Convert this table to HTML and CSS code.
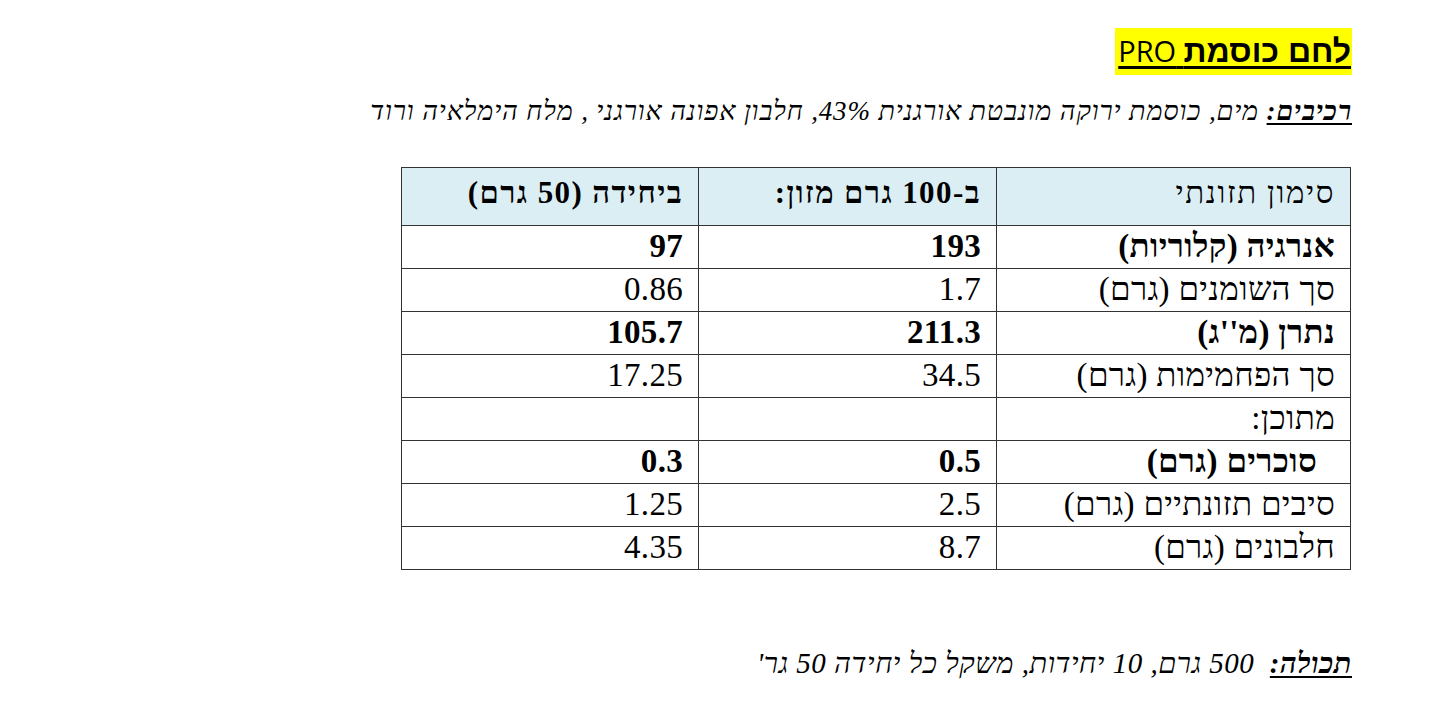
FILE: index.html
```html
<!DOCTYPE html>
<html lang="he" dir="rtl">
<head>
<meta charset="utf-8">
<link rel="stylesheet" href="styles.css">
</head>
<body>
<div class="page">
  <h1 class="title"><span class="hl"><b class="title-he">לחם כוסמת</b> <span class="title-pro">PRO</span></span></h1>
  <p class="ingredients"><b class="lbl">רכיבים:</b> מים, כוסמת ירוקה מונבטת אורגנית 43%, חלבון אפונה אורגני , מלח הימלאיה ורוד</p>
  <table class="nutri">
    <colgroup><col class="c1"><col class="c2"><col class="c3"></colgroup>
    <thead>
      <tr><th class="lab">סימון תזונתי</th><th>ב-100 גרם מזון:</th><th>ביחידה (50 גרם)</th></tr>
    </thead>
    <tbody>
      <tr class="bold"><td>אנרגיה (קלוריות)</td><td>193</td><td>97</td></tr>
      <tr><td>סך השומנים (גרם)</td><td>1.7</td><td>0.86</td></tr>
      <tr class="bold"><td>נתרן (מ''ג)</td><td>211.3</td><td>105.7</td></tr>
      <tr><td>סך הפחמימות (גרם)</td><td>34.5</td><td>17.25</td></tr>
      <tr><td>מתוכן:</td><td></td><td></td></tr>
      <tr class="bold"><td class="indent">סוכרים (גרם)</td><td>0.5</td><td>0.3</td></tr>
      <tr><td>סיבים תזונתיים (גרם)</td><td>2.5</td><td>1.25</td></tr>
      <tr><td>חלבונים (גרם)</td><td>8.7</td><td>4.35</td></tr>
    </tbody>
  </table>
  <p class="content"><b class="lbl">תכולה:</b>&nbsp; 500 גרם, 10 יחידות, משקל כל יחידה 50 גר'</p>
</div>
</body>
</html>
```
FILE: styles.css
```css
html, body {
  margin: 0;
  padding: 0;
  background: #fff;
}
body {
  font-family: "Liberation Serif", "DejaVu Serif", serif;
  color: #000;
}
.page {
  padding: 28px 88px 0 0;
  display: flex;
  flex-direction: column;
  align-items: flex-start;
}
.title {
  margin: 0;
  font-weight: normal;
  font-size: 29px;
  line-height: 46px;
}
.hl {
  display: inline-block;
  background: #ffff00;
  padding: 0 1px 0 3px;
  text-decoration: underline;
  text-decoration-thickness: 3px;
  text-underline-offset: 4px;
}
.title-he {
  font-family: "Liberation Sans", "DejaVu Sans", sans-serif;
  font-weight: bold;
  font-size: 32px;
}
.title-pro {
  font-family: "Open Sans", "Liberation Sans", sans-serif;
  font-weight: normal;
  font-size: 29px;
}
.ingredients {
  margin: 20px 0 0 0;
  font-size: 27px;
  letter-spacing: 0.85px;
  font-style: italic;
  line-height: 32px;
}
.lbl {
  text-decoration: underline;
  text-decoration-thickness: 2px;
  text-underline-offset: 3px;
}
.nutri {
  margin-top: 40px;
  margin-right: 1px;
  border-collapse: collapse;
  width: 950px;
  border: 1.5px solid #222;
}
.c1 { width: 354px; }
.c2 { width: 298px; }
.c3 { width: 297px; }
.nutri th, .nutri td {
  border: 1px solid #333;
  text-align: right;
  padding: 0 15px 0 15px;
  vertical-align: bottom;
  white-space: nowrap;
}
.nutri th {
  background: #dbeef4;
  font-size: 31px;
  letter-spacing: 1.4px;
  font-weight: bold;
  height: 58px;
  line-height: 32px;
  padding-bottom: 16px;
  box-sizing: border-box;
}
.nutri th.lab {
  font-weight: normal;
  letter-spacing: 1.6px;
}
.nutri td {
  font-size: 33px;
  letter-spacing: 0.3px;
  height: 43px;
  line-height: 33px;
  padding-bottom: 5px;
  box-sizing: border-box;
}
.nutri tr.bold td {
  font-weight: bold;
}
.nutri td.indent {
  padding-right: 33px;
}
.content {
  margin: 76px 0 0 0;
  font-size: 29px;
  letter-spacing: 0.5px;
  font-style: italic;
  line-height: 34px;
}
```
